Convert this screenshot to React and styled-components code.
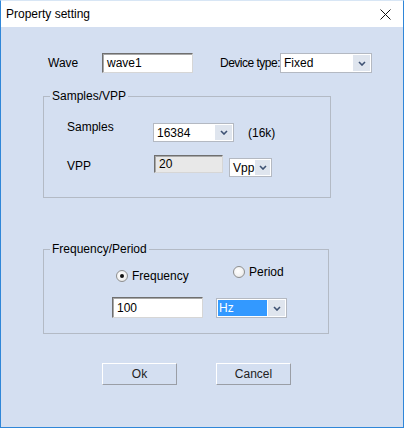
import styled, { createGlobalStyle } from 'styled-components';

const GlobalStyle = createGlobalStyle`
  body {
    margin: 0;
    background: #ffffff;
    font-family: "Liberation Sans", Arial, sans-serif;
    font-size: 12px;
    color: #000;
  }
`;

const Window = styled.div`
  width: 404px;
  height: 428px;
  box-sizing: border-box;
  border: 1px solid #2f86d8;
  border-top-color: #d8e6f5;
  background: #d4dff1;
  display: flex;
  flex-direction: column;
`;

const TitleBar = styled.div`
  height: 26px;
  background: #ffffff;
  display: flex;
  align-items: center;
  justify-content: space-between;
  padding: 0 12px 0 5px;
  flex-shrink: 0;
`;

const Title = styled.span`
  font-size: 12px;
  line-height: 14px;
`;

const Body = styled.div`
  flex: 1;
  display: flex;
  flex-direction: column;
`;

const TopRow = styled.div`
  display: flex;
  align-items: center;
  margin-top: 26px;
  padding-left: 47px;
  height: 20px;
`;

const Label = styled.span`
  display: inline-block;
  width: ${(p) => p.width || 'auto'};
  line-height: 16px;
  white-space: nowrap;
  letter-spacing: ${(p) => p.tight || 'normal'};
  margin-top: ${(p) => p.offset || '0px'};
  margin-left: ${(p) => p.left || '0px'};
  flex-shrink: 0;
`;

const TextBox = styled.div`
  width: ${(p) => p.width}px;
  height: ${(p) => p.height || 20}px;
  box-sizing: border-box;
  background: ${(p) => (p.disabled ? '#e8e8e8' : '#ffffff')};
  border-top: 1px solid #6f6f6f;
  border-left: 1px solid #6f6f6f;
  border-right: 1px solid #d6d6d6;
  border-bottom: 1px solid #d6d6d6;
  box-shadow: inset 1px 1px 0 #a8a8a8;
  padding-left: 4px;
  display: flex;
  align-items: center;
  flex-shrink: 0;
  margin-left: ${(p) => p.left || 0}px;
`;

const Combo = styled.div`
  width: ${(p) => p.width}px;
  height: ${(p) => p.height || 20}px;
  box-sizing: border-box;
  border: 1px solid #b4b9c2;
  background: #ffffff;
  display: flex;
  flex-shrink: 0;
  margin-top: ${(p) => p.top || 0}px;
  margin-left: ${(p) => p.left || 0}px;
`;

const ComboField = styled.div`
  flex: 1;
  display: flex;
  align-items: center;
  padding-left: ${(p) => (p.selected ? '1px' : '3px')};
  margin: ${(p) => (p.selected ? '1px 0 1px 1px' : '0')};
  background: ${(p) => (p.selected ? '#3399ff' : 'transparent')};
  color: ${(p) => (p.selected ? '#ffffff' : '#000')};
`;

const ComboButton = styled.div`
  width: 17px;
  margin: 1px;
  background: #dfe5ee;
  display: flex;
  align-items: center;
  justify-content: center;
`;

const GroupBox = styled.fieldset`
  margin: ${(p) => p.top}px 0 0 42px;
  padding: 0;
  width: ${(p) => p.width}px;
  box-sizing: border-box;
  border: 1px solid #b3bac5;
  min-width: 0;
`;

const Legend = styled.legend`
  margin-left: 6px;
  padding: 0 2px;
  line-height: 14px;
  font-size: 12px;
`;

const GroupContent = styled.div`
  display: flex;
  flex-direction: column;
  padding: ${(p) => p.pad};
`;

const Row = styled.div`
  display: flex;
  align-items: flex-start;
  margin-top: ${(p) => p.top || 0}px;
  padding-left: ${(p) => p.indent || 0}px;
`;

const RadioItem = styled.div`
  display: flex;
  align-items: center;
  gap: 4px;
  width: ${(p) => p.width || 'auto'};
  margin-top: ${(p) => p.top || 0}px;
  line-height: 14px;
`;

const RadioCircle = styled.span`
  width: 12px;
  height: 12px;
  box-sizing: border-box;
  border-radius: 50%;
  border: 1px solid #8e8f8f;
  background: radial-gradient(circle at 40% 40%, #ffffff 0%, #f2f2f2 55%, #d8d8d8 100%);
  display: flex;
  align-items: center;
  justify-content: center;
  &::after {
    content: '';
    width: 4px;
    height: 4px;
    border-radius: 50%;
    background: ${(p) => (p.checked ? '#111' : 'transparent')};
  }
`;

const ButtonRow = styled.div`
  display: flex;
  gap: 39px;
  margin-top: 29px;
  padding-left: 101px;
`;

const Button = styled.div`
  width: 75px;
  height: 22px;
  box-sizing: border-box;
  border-top: 1px solid #ffffff;
  border-left: 1px solid #ffffff;
  border-right: 1px solid #9a9ea6;
  border-bottom: 1px solid #9a9ea6;
  display: flex;
  align-items: center;
  justify-content: center;
  color: #222;
`;

const Chevron = () => (
  <svg width="8" height="5" viewBox="0 0 8 5">
    <polyline points="1,1 4,4 7,1" fill="none" stroke="#3e5273" strokeWidth="1.6" />
  </svg>
);

const CloseIcon = () => (
  <svg width="11" height="11" viewBox="0 0 11 11">
    <path d="M0.5 0.5 L10.5 10.5 M10.5 0.5 L0.5 10.5" stroke="#111" strokeWidth="1" />
  </svg>
);

const ComboBox = ({ value, width, height, top, left, selected }) => (
  <Combo width={width} height={height} top={top} left={left}>
    <ComboField selected={selected}>{value}</ComboField>
    <ComboButton>
      <Chevron />
    </ComboButton>
  </Combo>
);

const App = () => {
  return (
    <>
      <GlobalStyle />
      <Window>
        <TitleBar>
          <Title>Property setting</Title>
          <CloseIcon />
        </TitleBar>
        <Body>
          <TopRow>
            <Label width="54px">Wave</Label>
            <TextBox width={91}>wave1</TextBox>
            <Label width="60px" left="27px" tight="-0.5px">Device type:</Label>
            <ComboBox value="Fixed" width={92} />
          </TopRow>

          <GroupBox top={16} width={288}>
            <Legend>Samples/VPP</Legend>
            <GroupContent pad="16px 0 20px 23px">
              <Row>
                <Label width="86px">Samples</Label>
                <ComboBox value="16384" width={81} height={19} top={4} />
                <Label left="14px" offset="6px">(16k)</Label>
              </Row>
              <Row top={13}>
                <Label width="87px" offset="3px">VPP</Label>
                <TextBox width={69} height={18} disabled>20</TextBox>
                <ComboBox value="Vpp" width={43} height={19} top={3} left={6} />
              </Row>
            </GroupContent>
          </GroupBox>

          <GroupBox top={44} width={286}>
            <Legend>Frequency/Period</Legend>
            <GroupContent pad="9px 0 15px 68px">
              <Row indent={4}>
                <RadioItem width="117px" top={4}>
                  <RadioCircle checked />
                  Frequency
                </RadioItem>
                <RadioItem>
                  <RadioCircle />
                  Period
                </RadioItem>
              </Row>
              <Row top={14}>
                <TextBox width={91} height={21}>100</TextBox>
                <ComboBox value="Hz" width={71} height={20} top={1} left={13} selected />
              </Row>
            </GroupContent>
          </GroupBox>

          <ButtonRow>
            <Button>Ok</Button>
            <Button>Cancel</Button>
          </ButtonRow>
        </Body>
      </Window>
    </>
  );
};

export default App;
